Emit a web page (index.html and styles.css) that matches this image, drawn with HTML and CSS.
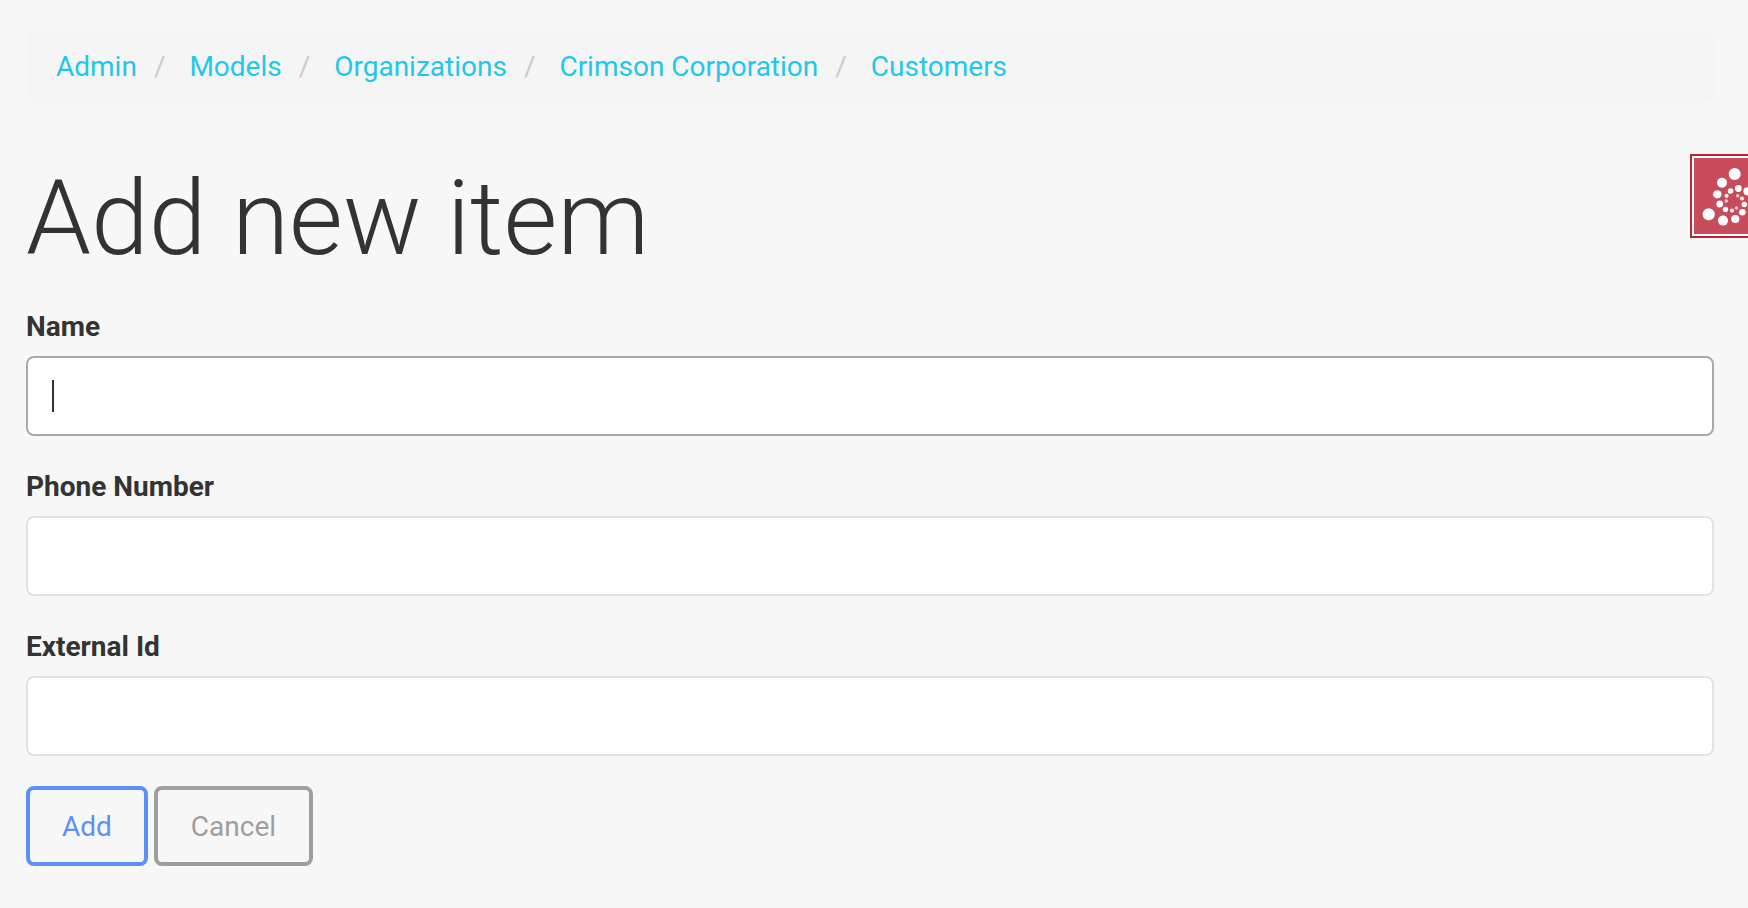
FILE: index.html
```html
<!DOCTYPE html>
<html lang="en">
<head>
<meta charset="utf-8">
<title>Add new item</title>
<link rel="stylesheet" href="styles.css">
</head>
<body>
<main class="page">
  <nav aria-label="Breadcrumb">
    <ol class="breadcrumb">
      <li><a href="#">Admin</a></li>
      <li><a href="#">Models</a></li>
      <li><a href="#">Organizations</a></li>
      <li><a href="#">Crimson Corporation</a></li>
      <li><a href="#">Customers</a></li>
    </ol>
  </nav>
  <h1 class="title">Add new item</h1>
  <form class="form">
    <div class="field">
      <label for="name">Name</label>
      <div class="control">
        <input class="input input-active" id="name" type="text">
        <span class="caret"></span>
      </div>
    </div>
    <div class="field">
      <label for="phone">Phone Number</label>
      <input class="input" id="phone" type="text">
    </div>
    <div class="field">
      <label for="external-id">External Id</label>
      <input class="input" id="external-id" type="text">
    </div>
    <div class="actions">
      <button class="button button-primary" type="submit">Add</button>
      <button class="button button-default" type="button">Cancel</button>
    </div>
  </form>
</main>
<button class="badge" type="button" aria-label="Open panel">
  <svg width="54" height="76" viewBox="0 0 54 76" fill="#fff" aria-hidden="true">
    <circle cx="40.7" cy="16" r="6"/>
    <circle cx="28" cy="24.7" r="5"/>
    <circle cx="23.3" cy="36.3" r="4.1"/>
    <circle cx="25.7" cy="46" r="3.4"/>
    <circle cx="31.5" cy="51.5" r="2.7"/>
    <circle cx="38" cy="52.6" r="2.1" opacity=".9"/>
    <circle cx="42.5" cy="50" r="1.7" opacity=".75"/>
    <circle cx="14.7" cy="56.3" r="6.1"/>
    <circle cx="29" cy="62.6" r="5"/>
    <circle cx="41.3" cy="61" r="4.1"/>
    <circle cx="48.4" cy="54.2" r="3.3"/>
    <circle cx="50.3" cy="46.5" r="2.7"/>
    <circle cx="48" cy="40.5" r="2.1" opacity=".9"/>
    <circle cx="43.7" cy="37.7" r="1.7" opacity=".75"/>
    <circle cx="53.5" cy="33.3" r="4.1"/>
    <circle cx="44.3" cy="30.5" r="3.4"/>
    <circle cx="36.6" cy="33" r="2.8"/>
    <circle cx="32.6" cy="37.8" r="2.1" opacity=".9"/>
    <circle cx="32.3" cy="43" r="1.7" opacity=".75"/>
  </svg>
</button>
</body>
</html>
```
FILE: styles.css
```css
* { box-sizing: border-box; }
body {
  margin: 0;
  background: #f7f7f7;
  color: #333;
  font: 28px/40px Roboto, sans-serif;
}
.page { padding: 30px 34px 42px 26px; }
.breadcrumb {
  display: flex;
  margin: 0;
  padding: 17px 30px 15px;
  background: #f5f5f5;
  border-radius: 8px;
  list-style: none;
}
.breadcrumb a { color: #1fc8eb; text-decoration: none; }
.breadcrumb li + li::before {
  content: "/\00a0";
  padding: 0 17px 0 17px;
  color: #ccc;
}
.title {
  margin: 60px 0 30px;
  font-size: 104px;
  font-weight: 300;
  line-height: 114px;
}
.field { margin-bottom: 30px; }
.field label {
  display: block;
  padding-top: 1px;
  margin-bottom: 9px;
  font-weight: 700;
}
.control { position: relative; }
.input {
  display: block;
  width: 100%;
  height: 80px;
  padding: 18px 24px;
  border: 2px solid #e2e2e2;
  border-radius: 8px;
  background: #fff;
  color: #333;
  font: inherit;
  outline: none;
}
.input-active { border-color: #aaa; }
.caret {
  position: absolute;
  top: 24px;
  left: 26px;
  width: 2px;
  height: 32px;
  background: #333;
}
.actions { display: flex; gap: 6px; }
.button {
  padding: 17px 32px 15px;
  border: 4px solid;
  border-radius: 8px;
  background: transparent;
  font: inherit;
}
.button-primary { border-color: #5b90fb; color: #5b90fb; }
.button-default { padding-inline: 33px; border-color: #9e9e9e; color: #9e9e9e; }
.badge {
  position: fixed;
  top: 154px;
  right: 0;
  padding: 2px 0 2px 2px;
  border: 2px solid #bc2237;
  border-right: 0;
  background: #fff;
}
.badge svg { display: block; background: #c74b5a; }
```
